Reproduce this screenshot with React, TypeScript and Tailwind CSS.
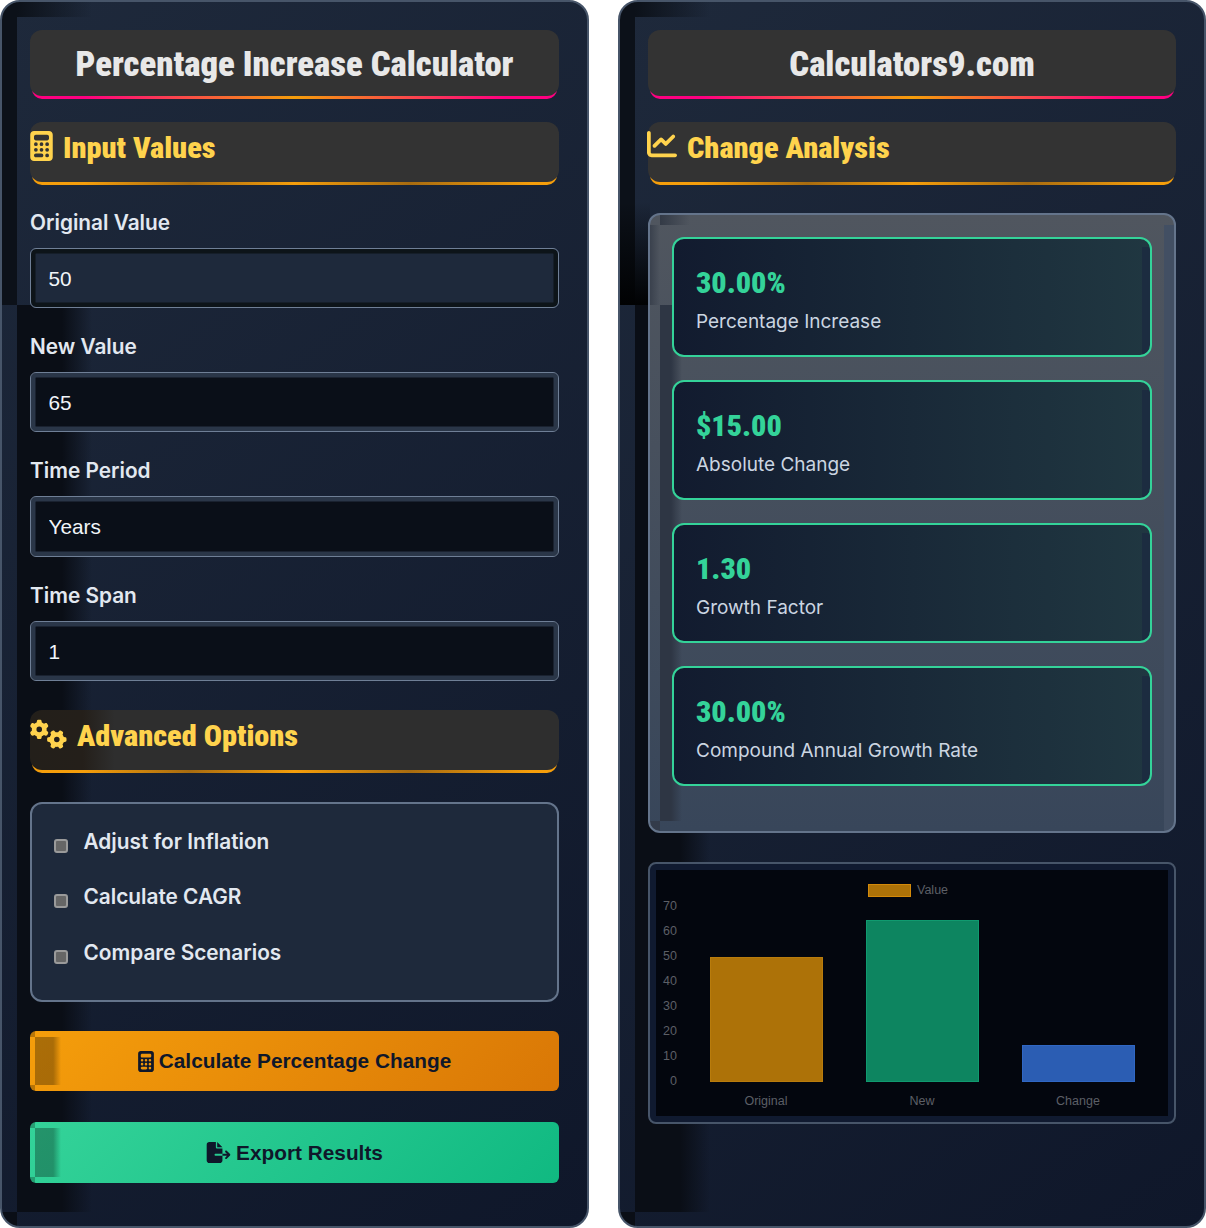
import React from 'react';
import { FaCalculator, FaChartLine, FaFileExport, FaGears } from 'react-icons/fa6';

const condensed = "font-['Roboto',sans-serif] font-black [font-stretch:75%]";
const inter = "font-['Inter',sans-serif]";
const liberation = "font-['Liberation_Sans',sans-serif]";

// the odd tiled inset shadow of the panels, as background layers
const panelBg =
    '[background:linear-gradient(#0c1119,#0c1119)_0_0/15px_303px_no-repeat,linear-gradient(90deg,#0c1119,transparent)_15px_0/75px_15px_no-repeat,linear-gradient(90deg,#0a0e16,#0a0e16_60%,transparent)_15px_303px/75px_907px_no-repeat,linear-gradient(#0a0e16,#0a0e16)_0_1210px/15px_16px_no-repeat,linear-gradient(145deg,#1e293b,#0f172a)]';
const panelBgDark =
    '[background:linear-gradient(transparent,#010203)_0_200px/30px_103px_no-repeat,linear-gradient(#0c1119,#0c1119)_0_0/15px_303px_no-repeat,linear-gradient(90deg,#0c1119,transparent)_15px_0/75px_15px_no-repeat,linear-gradient(90deg,#0a0e16,#0a0e16_60%,transparent)_15px_303px/75px_907px_no-repeat,linear-gradient(#0a0e16,#0a0e16)_0_1210px/15px_16px_no-repeat,linear-gradient(145deg,#1e293b,#0f172a)]';
const resultsBg =
    '[background:linear-gradient(90deg,#2e3644,#2e3644_50%,transparent)_10px_90px/22px_516px_no-repeat,linear-gradient(90deg,#333a46,transparent)_10px_0/30px_10px_no-repeat,linear-gradient(90deg,#3a414d,transparent)_0_10px/10px_80px_no-repeat,linear-gradient(#333b4a,#333b4a)_0_100%/10px_10px_no-repeat,linear-gradient(#424f63,#424f63)_100%_10px/10px_606px_no-repeat,linear-gradient(180deg,#50565f,#38465a)]';
const cardBg =
    '[background:linear-gradient(#1c2c40,#1c2c40)_100%_8px/8px_108px_no-repeat,linear-gradient(90deg,#121b2f,#203741)]';
const orangeBtn =
    '[background:linear-gradient(90deg,rgba(0,0,0,.3),rgba(0,0,0,.3)_70%,transparent)_5px_6px/26px_48px_no-repeat,linear-gradient(rgba(0,0,0,.25),rgba(0,0,0,.25))_0_0/5px_6px_no-repeat,linear-gradient(rgba(0,0,0,.25),rgba(0,0,0,.25))_0_100%/5px_6px_no-repeat,linear-gradient(135deg,#f59e0b,#d97706)]';
const greenBtn =
    '[background:linear-gradient(90deg,rgba(0,0,0,.3),rgba(0,0,0,.3)_70%,transparent)_5px_6px/26px_49px_no-repeat,linear-gradient(rgba(0,0,0,.25),rgba(0,0,0,.25))_0_0/5px_6px_no-repeat,linear-gradient(rgba(0,0,0,.25),rgba(0,0,0,.25))_0_100%/5px_6px_no-repeat,linear-gradient(135deg,#34d399,#10b981)]';

const MainHeader = ({ title }: { title: string }) => (
    <div className="mx-[2px] h-[69px] rounded-b-[10px] [background:linear-gradient(90deg,#ff0080_10%,#f59e0b,#ff0080_90%)_bottom/100%_14px_no-repeat]">
        <div className="-mx-[2px] h-[66px] rounded-xl bg-[#333333] flex items-center justify-center">
            <h1 className={`${condensed} text-[34.7px] leading-none text-[#e8e8e8] pt-[2px]`}>{title}</h1>
        </div>
    </div>
);

const SectionHeader = ({ icon, title, bg }: { icon: React.ReactNode; title: string; bg?: string }) => (
    <div className="mx-[2px] h-[63px] rounded-b-[10px] [background:linear-gradient(90deg,#f59e0b,#f59e0b_10%,#a86c10_30%,#f59e0b_50%,#a86c10_72%,#f59e0b_95%)_bottom/100%_14px_no-repeat]">
        <div className={`-mx-[2px] h-[60px] rounded-xl flex items-start gap-[10px] pt-[9px] text-[#ffd34d] ${bg ?? 'bg-[#333333]'}`}>
            {icon}
            <h2 className={`${condensed} text-[30.3px] leading-[34px]`}>{title}</h2>
        </div>
    </div>
);

const Field = ({ label, value, dark, select }: { label: string; value: string; dark?: boolean; select?: boolean }) => {
    const cls = `block w-full rounded-md border-[1.5px] border-[#6f7f96] pl-[17.5px] pt-[1px] text-[20.8px] text-[#f1f5f9] appearance-none outline-none ${liberation} ${
        select ? 'h-[61px]' : 'h-[60px]'
    } ${dark ? 'bg-[#0a0f18] shadow-[inset_0_0_0_4.5px_#2a3648]' : 'bg-[#1e293b] shadow-[inset_0_0_0_4.5px_#0d1419]'}`;
    return (
        <div className="flex flex-col gap-[13px]">
            <label className={`h-[24px] text-[20.8px] leading-[24px] font-semibold text-[#e2e8f0] ${inter}`}>{label}</label>
            {select ? (
                <select className={cls} defaultValue={value}><option>{value}</option></select>
            ) : (
                <input className={cls} defaultValue={value} />
            )}
        </div>
    );
};

const Check = ({ label }: { label: string }) => (
    <div className="flex h-[55.5px] items-center gap-[15.5px] pl-[22px]">
        <span className="w-[14px] h-[14px] rounded-[3px] bg-[#666666] border-2 border-[#9a9a9a] shrink-0" />
        <span className={`pb-[8px] text-[20.8px] leading-[28px] font-semibold text-[#e2e8f0] ${inter}`}>{label}</span>
    </div>
);

const ActionButton = ({ icon, label, colors }: { icon: React.ReactNode; label: string; colors: string }) => (
    <button className={`w-full rounded-md flex items-center justify-center gap-[5px] text-[#0f172a] text-[20.8px] font-bold ${liberation} ${colors}`}>
        {icon}
        <span>{label}</span>
    </button>
);

const Result = ({ value, label }: { value: string; label: string }) => (
    <div className={`h-[120px] rounded-xl border-2 border-[#34d399] pl-[22px] pt-[6px] flex flex-col justify-center gap-[10px] ${cardBg}`}>
        <div className={`${condensed} text-[#34d399] text-[30px] leading-[34px]`}>{value}</div>
        <div className={`text-[#cbd5e1] text-[19px] leading-[24px] ${inter}`}>{label}</div>
    </div>
);

const Chart = () => {
    const ticks = [70, 60, 50, 40, 30, 20, 10, 0];
    const labelProps = { fill: '#5c5f66', fontSize: 12.5, fontFamily: "'Liberation Sans', sans-serif" };
    return (
        <svg width="512" height="246" viewBox="656 870 512 246" className="block">
            <rect x="656" y="870" width="512" height="246" fill="#03060e" />
            <rect x="868.5" y="884.5" width="42" height="12" fill="#ad7208" stroke="#d48a0a" />
            <text x="917" y="894" {...labelProps}>Value</text>
            {ticks.map((t, i) => (
                <text key={t} x="677" y={910 + i * 25} textAnchor="end" {...labelProps}>{t}</text>
            ))}
            <rect x="710.5" y="957.5" width="112" height="124" fill="#ad7208" stroke="#b97c0c" />
            <rect x="866.5" y="920.5" width="112" height="161" fill="#0d8560" stroke="#109a6f" />
            <rect x="1022.5" y="1045.5" width="112" height="36" fill="#2b5db3" stroke="#3067c4" />
            <text x="766" y="1105" textAnchor="middle" {...labelProps}>Original</text>
            <text x="922" y="1105" textAnchor="middle" {...labelProps}>New</text>
            <text x="1078" y="1105" textAnchor="middle" {...labelProps}>Change</text>
        </svg>
    );
};

const App = () => {
    return (
        <div className="w-[1206px] h-[1228px] bg-white flex gap-[29px]">
            <div className={`w-[589px] h-[1228px] rounded-[20px] border-2 border-[#475569] overflow-hidden p-[28px] flex flex-col gap-[29px] ${panelBg}`}>
                <div className="flex flex-col gap-[23px]">
                    <MainHeader title="Percentage Increase Calculator" />
                    <div className="flex flex-col gap-[26px]">
                        <SectionHeader icon={<FaCalculator className="w-[23px] h-[30px]" />} title="Input Values" />
                        <div className="flex flex-col gap-[27px]">
                            <Field label="Original Value" value="50" />
                            <Field label="New Value" value="65" dark />
                            <Field label="Time Period" value="Years" dark select />
                            <Field label="Time Span" value="1" dark />
                        </div>
                    </div>
                </div>
                <SectionHeader
                    bg="bg-[linear-gradient(90deg,#231f1a,#241f1a_10%,#2e2e2e_16%,#2e2e2e)]"
                    icon={<FaGears className="w-[37px] h-[30px]" />}
                    title="Advanced Options"
                />
                <div className="h-[200px] rounded-xl border-2 border-[#64748b] bg-[#1e293b] flex flex-col justify-center pb-[2px]">
                    <Check label="Adjust for Inflation" />
                    <Check label="Calculate CAGR" />
                    <Check label="Compare Scenarios" />
                </div>
                <div className="grid grid-rows-[60px_61px] gap-[31px]">
                    <ActionButton
                        colors={orangeBtn}
                        icon={<FaCalculator className="w-[16px] h-[21px]" />}
                        label="Calculate Percentage Change"
                    />
                    <ActionButton
                        colors={greenBtn}
                        icon={<FaFileExport className="w-[25px] h-[21px]" />}
                        label="Export Results"
                    />
                </div>
            </div>
            <div className={`w-[588px] h-[1228px] rounded-[20px] border-2 border-[#475569] overflow-hidden p-[28px] flex flex-col gap-[29px] ${panelBgDark}`}>
                <div className="flex flex-col gap-[28px]">
                    <div className="flex flex-col gap-[23px]">
                        <MainHeader title="Calculators9.com" />
                        <SectionHeader icon={<FaChartLine className="w-[30px] h-[30px] -ml-[1px] -mt-[2px]" />} title="Change Analysis" />
                    </div>
                    <div className={`h-[620px] rounded-xl border-2 border-[#64748b] p-[22px] flex flex-col gap-[23px] ${resultsBg}`}>
                        <Result value="30.00%" label="Percentage Increase" />
                        <Result value="$15.00" label="Absolute Change" />
                        <Result value="1.30" label="Growth Factor" />
                        <Result value="30.00%" label="Compound Annual Growth Rate" />
                    </div>
                </div>
                <div className="h-[262px] rounded-lg border-2 border-[#475569] bg-[#101a30] p-[6px]">
                    <Chart />
                </div>
            </div>
        </div>
    );
};

export default App;
